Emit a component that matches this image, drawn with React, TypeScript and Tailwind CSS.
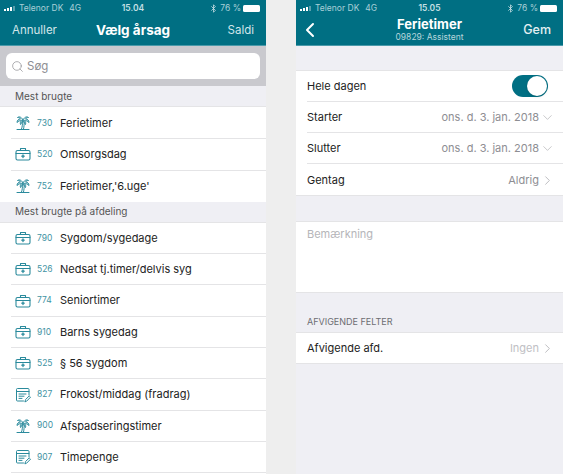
import { Bluetooth, ChevronDown, ChevronLeft, ChevronRight, Search } from 'lucide-react';

const font = 'font-["Inter",sans-serif]';

function Palm() {
  return (
    <svg width="16" height="16" viewBox="0 0 16 16" fill="none" stroke="#2a8a9c" strokeWidth="1" strokeLinecap="round" strokeLinejoin="round">
      <path d="M8 5C7 2.500 4.500 1 2.500 2.500c1.500 0 2.500.5 3 1.500C3.500 4 2 5.500 2 7.500 3.500 6 5 5.500 6.500 5.500 5.500 6.500 5 8 5.500 9.500 6.500 8 7.500 6.500 8 5Z" fill="#dceef1" />
      <path d="M8 5c1-2.500 3.500-4 5.500-2.500-1.500 0-2.500.5-3 1.500 2 0 3.500 1.500 3.500 3.500C12.500 6 11 5.500 9.500 5.500c1 1 1.500 2.500 1 4C9.500 8 8.500 6.500 8 5Z" fill="#dceef1" />
      <path d="M7.300 6.500c.3 2.500.1 5-.8 7.500M9 6.500c.3 2.500.1 5-.5 7.500" />
      <path d="M2 14.500h12" />
    </svg>
  );
}

function Kit() {
  return (
    <svg width="16" height="14" viewBox="0 0 16 14" fill="none" stroke="#2a8a9c" strokeWidth="1.100" strokeLinecap="round" strokeLinejoin="round">
      <rect x="1" y="3.500" width="14" height="9.500" rx="1.500" />
      <path d="M5.500 3.500V1.500h5v2M1 6.500h14" />
      <path d="M8 8v2.500M6.800 9.200h2.400" strokeWidth="1.300" />
    </svg>
  );
}

function Sheet() {
  return (
    <svg width="16" height="16" viewBox="0 0 16 16" fill="none" stroke="#2a8a9c" strokeWidth="1" strokeLinecap="round" strokeLinejoin="round">
      <path d="M14 8V2.500A1 1 0 0 0 13 1.500H2.500a1 1 0 0 0-1 1V13a1 1 0 0 0 1 1h6" />
      <path d="M1.500 4.500H14M4 7h7M4 9.200h5M4 11.400h3" />
      <path d="M10 14.500l.6-2 3.600-3.600 1.300 1.300-3.600 3.700Z" />
    </svg>
  );
}

type Kind = 'palm' | 'kit' | 'sheet';

const top: [Kind, string, string][] = [
  ['palm', '730', 'Ferietimer'],
  ['kit', '520', 'Omsorgsdag'],
  ['palm', '752', "Ferietimer,'6.uge'"],
];

const dept: [Kind, string, string][] = [
  ['kit', '790', 'Sygdom/sygedage'],
  ['kit', '526', 'Nedsat tj.timer/delvis syg'],
  ['kit', '774', 'Seniortimer'],
  ['kit', '910', 'Barns sygedag'],
  ['kit', '525', '§ 56 sygdom'],
  ['sheet', '827', 'Frokost/middag (fradrag)'],
  ['palm', '900', 'Afspadseringstimer'],
  ['sheet', '907', 'Timepenge'],
];

function StatusBar({ time }: { time: string }) {
  return (
    <div className="relative flex h-[17px] items-center pl-1 pr-[6px] text-[8.500px] text-[#a9d0d8]">
      <div className="flex items-end gap-px">
        <span className="h-[2px] w-[2px] bg-white" />
        <span className="h-[3px] w-[2px] bg-white" />
        <span className="h-[4px] w-[2px] bg-white" />
        <span className="h-[5px] w-[2px] bg-[#5b9fad]" />
      </div>
      <span className="ml-[4px]">Telenor DK</span>
      <span className="ml-[6px]">4G</span>
      <span className="absolute left-0 right-0 text-center font-semibold text-[#c6e0e5]">{time}</span>
      <Bluetooth size={9} strokeWidth={2} className="ml-auto text-[#d3e6ea]" />
      <span className="ml-[2px]">76 %</span>
      <div className="ml-[2px] flex h-[7px] w-[17px] items-center rounded-[1.500px] bg-white" />
    </div>
  );
}

function ReasonRow({ kind, code, name, last }: { kind: Kind; code: string; name: string; last?: boolean }) {
  return (
    <div className="flex h-[31.300px] items-center pl-[11px]">
      <div className={`flex h-full flex-1 items-center ${last ? '' : 'border-b border-[#e4e4e6]'}`}>
        <div className="flex w-[26px] shrink-0 items-center pl-[4px]">
          {kind === 'palm' && <Palm />}
          {kind === 'kit' && <Kit />}
          {kind === 'sheet' && <Sheet />}
        </div>
        <span className="w-[23px] text-[8.500px] text-[#3f93a3]">{code}</span>
        <span className="text-[11px] text-[#222]">{name}</span>
      </div>
    </div>
  );
}

function FormRow({ label, value, icon, last }: { label: string; value: string; icon: 'down' | 'right'; last?: boolean }) {
  return (
    <div className={`ml-[11px] flex h-[31px] items-center pr-[8px] pt-px ${last ? '' : 'border-b border-[#e4e4e6]'}`}>
      <span className="text-[11px] text-[#222]">{label}</span>
      <span className="ml-auto text-[11px] text-[#8e8e93]">{value}</span>
      {icon === 'down'
        ? <ChevronDown size={15} strokeWidth={1} className="ml-[1px] text-[#a8a8ac]" />
        : <ChevronRight size={15} strokeWidth={1.200} className="ml-[1px] text-[#a8a8ac]" />}
    </div>
  );
}

export default function App() {
  return (
    <div className={`flex h-[474px] w-[563px] overflow-hidden bg-[#eeeeee] ${font}`}>
      <div className="flex w-[266px] shrink-0 flex-col bg-white">
        <div className="h-[46px] border-b border-[#4a9aaa] bg-[#006f83] text-white">
          <StatusBar time="15.04" />
          <div className="relative flex h-[26px] items-center justify-between px-[12px] text-[11.500px] text-[#d3e6ea]">
            <span className="pt-[2px]">Annuller</span>
            <span className="absolute left-0 right-0 text-center text-[13.500px] font-bold text-white">Vælg årsag</span>
            <span className="pt-[2px]">Saldi</span>
          </div>
        </div>
        <div className="bg-[#c9c9ce] px-[6px] py-[7px]">
          <div className="flex h-[26px] items-center rounded-[6px] bg-white pl-[5px] text-[11.500px] text-[#8e8e93]">
            <Search size={13} strokeWidth={1.300} />
            <span className="ml-[3px] pt-px">Søg</span>
          </div>
        </div>
        <div className="flex h-[21px] items-center border-b border-[#e4e4e6] bg-[#efeff4] pl-[15px] text-[10px] text-[#555]">Mest brugte</div>
        <div className="mt-[1px]" />
        {top.map((r, i) => <ReasonRow key={r[1]} kind={r[0]} code={r[1]} name={r[2]} last={i === top.length - 1} />)}
        <div className="flex h-[21px] items-center border-b border-[#e4e4e6] bg-[#efeff4] pl-[15px] text-[10px] text-[#555]">Mest brugte på afdeling</div>
        {dept.map(r => <ReasonRow key={r[1]} kind={r[0]} code={r[1]} name={r[2]} />)}
      </div>

      <div className="w-[30px] shrink-0" />

      <div className="flex w-[267px] shrink-0 flex-col bg-[#efeff4]">
        <div className="h-[46px] border-b border-[#4a9aaa] bg-[#006f83] text-white">
          <StatusBar time="15.05" />
          <div className="relative flex h-[26px] items-center justify-between pl-[2px] pr-[12px]">
            <ChevronLeft size={24} strokeWidth={2} className="text-white" />
            <div className="absolute left-0 right-0 top-0 flex flex-col items-center gap-px">
              <span className="text-[13px] leading-[15px] font-bold">Ferietimer</span>
              <span className="text-[8.500px] leading-[9px] text-[#b5d6dc]">09829: Assistent</span>
            </div>
            <span className="text-[12.500px] font-medium text-[#e4f0f2]">Gem</span>
          </div>
        </div>
        <div className="mt-[24px] border-y border-[#e4e4e6] bg-white">
          <div className="ml-[11px] flex h-[31px] items-center border-b border-[#e4e4e6] pr-[15px]">
            <span className="pt-px text-[11px] text-[#222]">Hele dagen</span>
            <div className="ml-auto flex h-[22px] w-[36px] items-center justify-end rounded-full bg-[#006f83] pr-[1px]">
              <span className="h-[20px] w-[20px] rounded-full bg-white shadow" />
            </div>
          </div>
          <FormRow label="Starter" value="ons. d. 3. jan. 2018" icon="down" />
          <FormRow label="Slutter" value="ons. d. 3. jan. 2018" icon="down" />
          <FormRow label="Gentag" value="Aldrig" icon="right" last />
        </div>
        <div className="mt-[25px] h-[72px] border-y border-[#e4e4e6] bg-white pl-[11px] pt-[4px] text-[11px] text-[#b5b5b9]">Bemærkning</div>
        <div className="flex h-[39px] items-end pb-[4px] pl-[11px] text-[9px] text-[#6d6d72]">AFVIGENDE FELTER</div>
        <div className="border-y border-[#e4e4e6] bg-white">
          <div className="ml-[11px] flex h-[30px] items-center pr-[8px]">
            <span className="text-[11px] text-[#222]">Afvigende afd.</span>
            <span className="ml-auto text-[11px] text-[#c0c0c4]">Ingen</span>
            <ChevronRight size={15} strokeWidth={1.200} className="ml-[1px] text-[#a8a8ac]" />
          </div>
        </div>
      </div>
    </div>
  );
}
